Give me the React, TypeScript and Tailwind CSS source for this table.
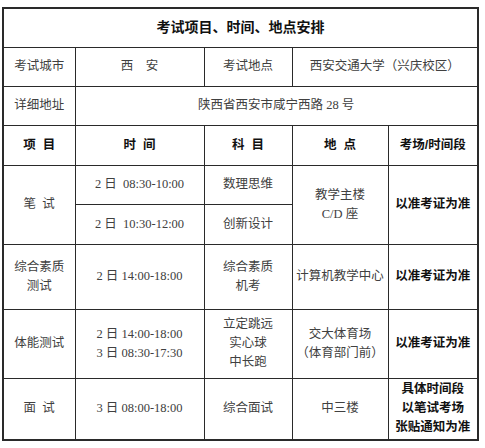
import type { ReactNode } from "react"

const serif = "font-['Liberation_Serif','Noto_Sans_CJK_SC',serif]"
const hei = "font-['Liberation_Sans','Noto_Sans_CJK_SC',sans-serif]"

function Td({
  children,
  bold,
  rowSpan,
  colSpan,
}: {
  children: ReactNode
  bold?: boolean
  rowSpan?: number
  colSpan?: number
}) {
  return (
    <td
      rowSpan={rowSpan}
      colSpan={colSpan}
      className={`border border-[#2a2a2a] text-center align-middle p-0 leading-[19px] whitespace-pre ${
        bold ? `${hei} font-bold text-[#111] text-[12.5px]` : `${serif} text-[#404040] text-[12.5px]`
      }`}
    >
      {children}
    </td>
  )
}

const exam = "以准考证为准"

export default function App() {
  return (
    <div className="w-[485px] h-[448px] bg-white">
      <table className="ml-[2px] mt-[7px] w-[477px] table-fixed border-collapse border-2 border-[#2a2a2a]">
        <colgroup>
          <col className="w-[72px]" />
          <col className="w-[129px]" />
          <col className="w-[88px]" />
          <col className="w-[96px]" />
          <col className="w-[90px]" />
        </colgroup>
        <tbody>
          <tr className="h-[39px]">
            <td colSpan={5} className={`border border-[#2a2a2a] text-center ${hei} font-bold text-[14px] text-[#111]`}>
              考试项目、时间、地点安排
            </td>
          </tr>
          <tr className="h-[39px]">
            <Td>考试城市</Td>
            <Td>西　安</Td>
            <Td>考试地点</Td>
            <Td colSpan={2}>西安交通大学（兴庆校区）</Td>
          </tr>
          <tr className="h-[39px]">
            <Td>详细地址</Td>
            <Td colSpan={4}>陕西省西安市咸宁西路 28 号</Td>
          </tr>
          <tr className="h-[40px]">
            <Td bold>项  目</Td>
            <Td bold>时  间</Td>
            <Td bold>科  目</Td>
            <Td bold>地  点</Td>
            <Td bold>考场/时间段</Td>
          </tr>
          <tr className="h-[39px]">
            <Td rowSpan={2}>笔  试</Td>
            <Td>2 日  08:30-10:00</Td>
            <Td>数理思维</Td>
            <Td rowSpan={2}>{"教学主楼\nC/D 座"}</Td>
            <Td bold rowSpan={2}>{exam}</Td>
          </tr>
          <tr className="h-[40px]">
            <Td>2 日  10:30-12:00</Td>
            <Td>创新设计</Td>
          </tr>
          <tr className="h-[65px]">
            <Td>{"综合素质\n测试"}</Td>
            <Td>2 日 14:00-18:00</Td>
            <Td>{"综合素质\n机考"}</Td>
            <Td>计算机教学中心</Td>
            <Td bold>{exam}</Td>
          </tr>
          <tr className="h-[69px]">
            <Td>体能测试</Td>
            <Td>{"2 日 14:00-18:00\n3 日 08:30-17:30"}</Td>
            <Td>{"立定跳远\n实心球\n中长跑"}</Td>
            <Td>{"交大体育场\n（体育部门前）"}</Td>
            <Td bold>{exam}</Td>
          </tr>
          <tr className="h-[62px]">
            <Td>面  试</Td>
            <Td>3 日 08:00-18:00</Td>
            <Td>综合面试</Td>
            <Td>中三楼</Td>
            <Td bold>{"具体时间段\n以笔试考场\n张贴通知为准"}</Td>
          </tr>
        </tbody>
      </table>
    </div>
  )
}
